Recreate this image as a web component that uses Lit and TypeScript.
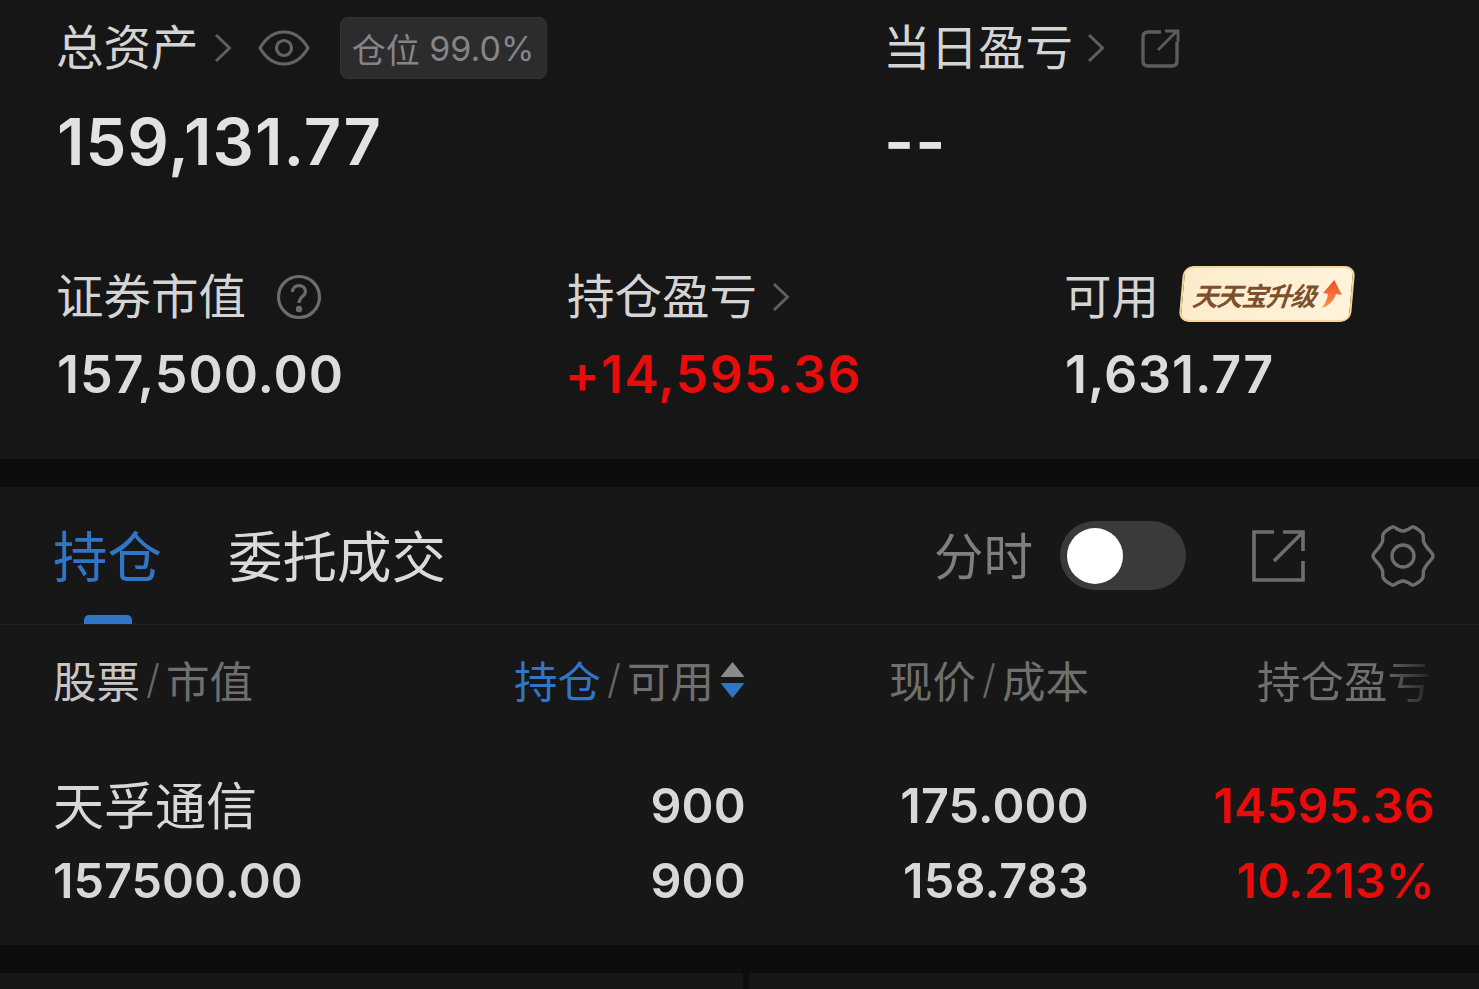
import { LitElement, html, css, svg } from "lit";
import { customElement } from "lit/decorators.js";

const chevron = svg`<svg class="chev" viewBox="0 0 18 30" fill="none" stroke="#5f5f5f" stroke-width="3"><path d="M2 2 L15.5 15 L2 28"/></svg>`;

function gearPath(): string {
  const q: [number, number][] = [[30, 0], [24, 8.5], [20.5, 14.5], [19.5, 22.5], [10.5, 29], [5, 26.5], [0, 25]];
  const pts: [number, number][] = [
    ...q,
    ...q.slice(0, -1).reverse().map(([x, y]): [number, number] => [-x, y]),
    ...q.slice(1).map(([x, y]): [number, number] => [-x, -y]),
    ...q.slice(0, -1).reverse().slice(0, -1).map(([x, y]): [number, number] => [x, -y]),
  ].map(([x, y]): [number, number] => [33 + x, 33 + y]);
  const n = pts.length;
  let d = `M${pts[0][0]} ${pts[0][1]}`;
  for (let i = 0; i < n; i++) {
    const p0 = pts[(i - 1 + n) % n], p1 = pts[i], p2 = pts[(i + 1) % n], p3 = pts[(i + 2) % n];
    const c1x = p1[0] + (p2[0] - p0[0]) / 6, c1y = p1[1] + (p2[1] - p0[1]) / 6;
    const c2x = p2[0] - (p3[0] - p1[0]) / 6, c2y = p2[1] - (p3[1] - p1[1]) / 6;
    d += ` C${c1x.toFixed(2)} ${c1y.toFixed(2)} ${c2x.toFixed(2)} ${c2y.toFixed(2)} ${p2[0]} ${p2[1]}`;
  }
  return d + " Z";
}

@customElement("app-root")
export class AppRoot extends LitElement {
  static styles = css`
    :host { display: block; width: 1479px; height: 989px; overflow: hidden; background: #0d0d0d;
      font-family: "Inter", "Noto Sans CJK SC", sans-serif; color: #dcdcdc; }
    .cjk { font-family: "Noto Sans CJK SC", sans-serif; }
    .assets { height: 459px; background: #161617; box-sizing: border-box; padding: 17px 0 0 56px; }
    .top { display: grid; grid-template-columns: 826px 1fr; }
    .lab { display: flex; align-items: center; height: 62px; }
    .t46 { font-size: 47.5px; line-height: 62px; color: #d4d4d4; font-weight: 400; white-space: nowrap; position: relative; top: -3px; }
    .chev { width: 18px; height: 30px; flex: none; }
    .eye { width: 52px; height: 36px; margin-left: 26px; flex: none; }
    .pos { margin-left: 30px; height: 62px; width: 207px; box-sizing: border-box; background: #2c2c2e; border: 1px solid #343436;
      border-radius: 8px; display: flex; align-items: center; justify-content: center; font-size: 34px; color: #858585; white-space: nowrap; }
    .ext { width: 40px; height: 40px; margin-left: 36px; flex: none; }
    .big { font-size: 65px; line-height: 80px; font-weight: 600; color: #e2e2e2; letter-spacing: 1px; margin-top: 23px; margin-left: 1px; white-space: nowrap; }
    .row2 { display: grid; grid-template-columns: 511px 497px 1fr; margin-top: 84px; }
    .val { font-size: 52px; line-height: 64px; font-weight: 600; color: #dcdcdc; margin-top: 15px; margin-left: 1px; letter-spacing: 0.9px; white-space: nowrap; }
    .val.red { margin-left: -2px; letter-spacing: 1.2px; }
    .red { color: #ea0b0b; }
    .q { width: 46px; height: 46px; margin-left: 30px; flex: none; }
    .tt { margin-left: 22px; margin-top: -6px; width: 172px; height: 56px; box-sizing: border-box; background: linear-gradient(100deg, #fdeccb, #fff3dc);
      border: 2px solid #f4d896; border-radius: 10px; transform: skewX(-5deg); display: flex; align-items: center; justify-content: center; gap: 6px; flex: none; }
    .tt span { font-size: 26px; font-weight: 700; font-style: italic; color: #7d4f2e; white-space: nowrap; letter-spacing: -1.4px; }
    .tt svg { width: 20px; height: 28px; flex: none; }

    .sep { height: 28px; }
    .hold { height: 458px; background: #171717; }
    .tabs { height: 138px; box-sizing: border-box; border-bottom: 1px solid #202020; display: flex; align-items: center; padding: 0 43px 0 53px; position: relative; }
    .tab { font-size: 54.5px; line-height: 70px; color: #dadada; white-space: nowrap; position: relative; top: -2px; }
    .tab.on { color: #2f76c9; }
    .tab + .tab { margin-left: 66px; }
    .bar { position: absolute; left: 84px; bottom: 0; width: 48px; height: 9px; background: #2f76c9; border-radius: 5px 5px 0 0; }
    .sp { flex: 1; }
    .fs { font-size: 49.5px; color: #7f7f7f; line-height: 60px; white-space: nowrap; position: relative; top: -2px; }
    .sw { width: 126px; height: 69px; margin-left: 27px; border-radius: 35px; background: #3a3a3c; display: flex; align-items: center; padding-left: 7px; box-sizing: border-box; flex: none; }
    .knob { width: 56px; height: 56px; border-radius: 50%; background: #fff; }
    .share { width: 54px; height: 54px; margin-left: 66px; flex: none; }
    .gear { width: 66px; height: 66px; margin-left: 64px; flex: none; }

    .grid { display: grid; grid-template-columns: 353px 340px 343px 346px; padding: 0 44px 0 53px; }
    .hd { height: 114px; align-items: center; font-size: 43.5px; color: #6f6f6f; white-space: nowrap; }
    .hd > div { display: flex; align-items: center; line-height: 58px; position: relative; top: -2px; }
    .r { justify-content: flex-end; text-align: right; }
    .w { color: #c6c6c6; }
    .b { color: #2f76c9; }
    .sl { font-size: 40px; margin: 0 6px; font-family: "Inter", sans-serif; font-weight: 300; color: #666; }
    .sort { width: 27px; height: 38px; margin-left: 5px; flex: none; }
    .fade { background: linear-gradient(90deg, #707070 70%, #232323 100%); -webkit-background-clip: text; background-clip: text; color: transparent; margin-right: 4px; }
    .dr { font-size: 48.5px; line-height: 75px; font-weight: 600; color: #d8d8d8; white-space: nowrap; letter-spacing: 0.2px; }
    .dr > div { text-align: right; }
    .dr > .name { text-align: left; font-weight: 400; font-size: 51px; letter-spacing: 0; position: relative; top: -2px; }
    .dr > .num { text-align: left; letter-spacing: 0; }
    .rows { margin-top: 29px; }

    .bottom { height: 17px; display: grid; grid-template-columns: 743px 1fr; gap: 6px; }
    .bottom div { background: #171717; }
  `;

  render() {
    return html`
      <section class="assets">
        <div class="top">
          <div>
            <div class="lab">
              <span class="t46 cjk">总资产</span><span style="width:15px"></span>${chevron}
              <svg class="eye" viewBox="0 0 52 36" fill="none" stroke="#646464" stroke-width="3.2"><path d="M2 18 C9 6 17 2 26 2 C35 2 43 6 50 18 C43 30 35 34 26 34 C17 34 9 30 2 18 Z"/><circle cx="26" cy="18" r="7.5"/></svg>
              <div class="pos"><span class="cjk">仓位</span>&nbsp;99.0%</div>
            </div>
            <div class="big">159,131.77</div>
          </div>
          <div>
            <div class="lab" style="padding-left:1px">
              <span class="t46 cjk">当日盈亏</span><span style="width:14px"></span>${chevron}
              <svg class="ext" viewBox="0 0 40 40" fill="none" stroke="#5c5c5c" stroke-width="3.4"><path d="M20 4 H7 Q2 4 2 9 V33 Q2 38 7 38 H31 Q36 38 36 33 V14"/><path d="M17 22 L36 3 M24 3 H37 V14" stroke-width="2.8"/></svg>
            </div>
            <div class="big" style="padding-left:1px">--</div>
          </div>
        </div>
        <div class="row2">
          <div>
            <div class="lab">
              <span class="t46 cjk">证券市值</span>
              <svg class="q" viewBox="0 0 46 46" fill="none" stroke="#6c6c6c" stroke-width="3.2"><circle cx="23" cy="23" r="20.5"/><path d="M16.5 18 C16.5 9.5 29.5 9.5 29.5 17.5 C29.5 22.5 23 22.5 23 29"/><circle cx="23" cy="35" r="1.6" fill="#6c6c6c"/></svg>
            </div>
            <div class="val">157,500.00</div>
          </div>
          <div>
            <div class="lab"><span class="t46 cjk">持仓盈亏</span><span style="width:15px"></span>${chevron}</div>
            <div class="val red">+14,595.36</div>
          </div>
          <div>
            <div class="lab">
              <span class="t46 cjk">可用</span>
              <div class="tt"><span class="cjk">天天宝升级</span>
                <svg viewBox="0 0 20 28"><defs><linearGradient id="up" x1="0" y1="0" x2="0" y2="1"><stop offset="0" stop-color="#ee4a22"/><stop offset="1" stop-color="#f6944a"/></linearGradient></defs><path d="M11 0 L20 15 L14 14 C13 20 8 26 1 28 C4 24 6 18 6 14 L1 13 Z" fill="url(#up)"/></svg>
              </div>
            </div>
            <div class="val">1,631.77</div>
          </div>
        </div>
      </section>
      <div class="sep"></div>
      <section class="hold">
        <div class="tabs">
          <div class="tab on cjk">持仓</div>
          <div class="tab cjk">委托成交</div>
          <div class="bar"></div>
          <div class="sp"></div>
          <div class="fs cjk">分时</div>
          <div class="sw"><div class="knob"></div></div>
          <svg class="share" viewBox="0 0 54 54" fill="none" stroke="#6e6e6e" stroke-width="3.6"><path d="M22 3 H2 V51 H51 V32"/><path d="M22 32 L50 4 M31 3 H51 V22"/></svg>
          <svg class="gear" viewBox="0 0 66 66" fill="none" stroke="#6e6e6e" stroke-width="3.4" stroke-linejoin="round"><path d=${gearPath()}/><circle cx="33" cy="33" r="11"/></svg>
        </div>
        <div class="grid hd cjk">
          <div><span class="w">股票</span><span class="sl">/</span><span>市值</span></div>
          <div class="r"><span class="b">持仓</span><span class="sl">/</span><span>可用</span>
            <svg class="sort" viewBox="0 0 26 38"><path d="M13 1 L25 16 H1 Z" fill="#8a8a8a"/><path d="M1 22 H25 L13 37 Z" fill="#2f76c9"/></svg></div>
          <div class="r"><span>现价</span><span class="sl">/</span><span>成本</span></div>
          <div class="r"><span class="fade">持仓盈亏</span></div>
        </div>
        <div class="rows">
          <div class="grid dr"><div class="name cjk">天孚通信</div><div>900</div><div>175.000</div><div class="red">14595.36</div></div>
          <div class="grid dr"><div class="num">157500.00</div><div>900</div><div>158.783</div><div class="red">10.213%</div></div>
        </div>
      </section>
      <div class="sep"></div>
      <div class="bottom"><div></div><div></div></div>
    `;
  }
}
